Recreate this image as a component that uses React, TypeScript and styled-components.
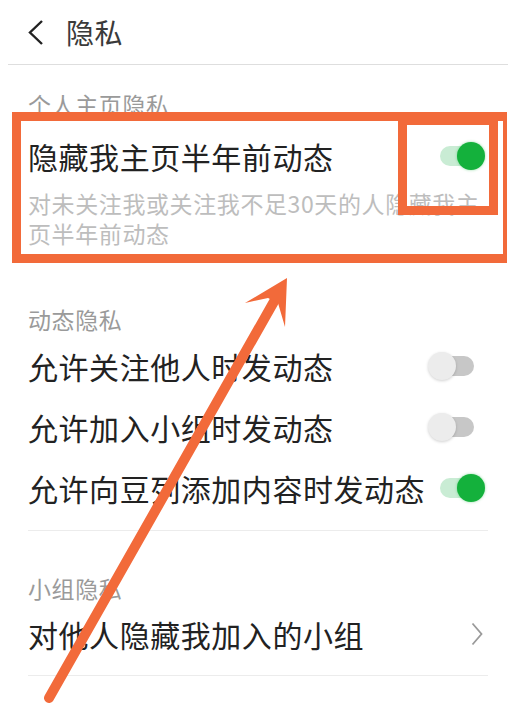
import React from 'react'
import styled, { createGlobalStyle } from 'styled-components'

const GlobalStyle = createGlobalStyle`
  html, body {
    margin: 0;
    padding: 0;
    background: #fff;
  }
  body {
    font-family: "Noto Sans CJK SC", "Noto Sans", sans-serif;
    -webkit-font-smoothing: antialiased;
  }
`

const orange = '#f26a3a'

const Page = styled.div`
  position: relative;
  width: 521px;
  height: 708px;
  overflow: hidden;
  background: #fff;
`

const Header = styled.header`
  display: flex;
  align-items: center;
  height: 64px;
  margin: 0 13px 0 8px;
  padding-left: 19px;
  border-bottom: 1px solid #dedede;

  h1 {
    margin: 0 0 0 22px;
    font-size: 28px;
    font-weight: 400;
    color: #3a3a3a;
    line-height: 1;
    letter-spacing: 0.5px;
  }
`

const Group = styled.section<{ $top: number; $bottom: number; $divider?: boolean }>`
  margin: 0 33px 0 28px;
  padding-top: ${(p) => p.$top}px;
  padding-bottom: ${(p) => p.$bottom}px;
  border-bottom: ${(p) => (p.$divider ? '1px solid #ececec' : 'none')};
`

const Label = styled.div`
  height: 32px;
  line-height: 32px;
  font-size: 23px;
  letter-spacing: 0.6px;
  color: #9a9a9a;
`

const Item = styled.div`
  padding: 16px 0 15px;
`

const Row = styled.div<{ $height: number }>`
  display: flex;
  align-items: center;
  justify-content: space-between;
  height: ${(p) => p.$height}px;
`

const Title = styled.span`
  font-size: 30px;
  line-height: 40px;
  letter-spacing: 0.55px;
  color: #222;
  white-space: nowrap;
`

const Desc = styled.p`
  margin: 12px 0 0;
  font-size: 23px;
  line-height: 30px;
  letter-spacing: 0.6px;
  color: #bdbdbd;
`

const Track = styled.span<{ $on: boolean }>`
  position: relative;
  flex: none;
  width: 34px;
  height: 20px;
  margin-right: 14px;
  border-radius: 10px;
  background: ${(p) => (p.$on ? '#c9ecd4' : '#c7c7c7')};

  &::after {
    content: '';
    position: absolute;
    top: -4px;
    left: ${(p) => (p.$on ? '17px' : '-12px')};
    width: 28px;
    height: 28px;
    border-radius: 50%;
    background: ${(p) => (p.$on ? '#14b13c' : '#ececec')};
    box-shadow: ${(p) =>
      p.$on ? '0 0 3px rgba(20, 177, 60, 0.45)' : '0 1px 3px rgba(0, 0, 0, 0.18)'};
  }
`

const Chevron = styled.svg`
  flex: none;
  margin-right: 5px;
`

const Overlay = styled.div`
  position: absolute;
  inset: 0;
  pointer-events: none;
`

const Frame = styled.div<{ $x: number; $y: number; $w: number; $h: number; $bw: string }>`
  position: absolute;
  left: ${(p) => p.$x}px;
  top: ${(p) => p.$y}px;
  width: ${(p) => p.$w}px;
  height: ${(p) => p.$h}px;
  box-sizing: border-box;
  border: solid ${orange};
  border-width: ${(p) => p.$bw};
`

const ArrowSvg = styled.svg`
  position: absolute;
  left: 0;
  top: 0;
`

function Toggle({ on }: { on: boolean }) {
  return <Track $on={on} />
}

export default function App(): JSX.Element {
  return (
    <Page>
      <GlobalStyle />
      <Header>
        <svg width='17' height='27' viewBox='0 0 17 27'>
          <path d='M15 2 L3 13.5 L15 25' fill='none' stroke='#222' strokeWidth='2.4' />
        </svg>
        <h1>隐私</h1>
      </Header>

      <Group $top={23} $bottom={0}>
        <Label>个人主页隐私</Label>
        <Item>
          <Row $height={40}>
            <Title>隐藏我主页半年前动态</Title>
            <Toggle on />
          </Row>
          <Desc>对未关注我或关注我不足30天的人隐藏我主页半年前动态</Desc>
        </Item>
      </Group>

      <Group $top={40} $bottom={12} $divider>
        <Label>动态隐私</Label>
        <Row $height={61}>
          <Title>允许关注他人时发动态</Title>
          <Toggle on={false} />
        </Row>
        <Row $height={61}>
          <Title>允许加入小组时发动态</Title>
          <Toggle on={false} />
        </Row>
        <Row $height={61}>
          <Title>允许向豆列添加内容时发动态</Title>
          <Toggle on />
        </Row>
      </Group>

      <Group $top={41} $bottom={11} $divider>
        <Label>小组隐私</Label>
        <Row $height={60}>
          <Title>对他人隐藏我加入的小组</Title>
          <Chevron width='12' height='24' viewBox='0 0 12 24'>
            <path d='M1.5 1.5 L10.5 12 L1.5 22.5' fill='none' stroke='#9a9a9a' strokeWidth='1.8' />
          </Chevron>
        </Row>
      </Group>

      <Overlay>
        <Frame $x={12} $y={112} $w={495} $h={151} $bw='9px 4px 9px 9px' />
        <Frame $x={398} $y={116} $w={100} $h={99} $bw='9px' />
        <ArrowSvg width='521' height='708' viewBox='0 0 521 708'>
          <line x1='49' y1='698' x2='276' y2='298' stroke={orange} strokeWidth='10' strokeLinecap='round' />
          <polygon points='287,278 285,327 278,303 268,298 245,303' fill={orange} />
        </ArrowSvg>
      </Overlay>
    </Page>
  )
}
